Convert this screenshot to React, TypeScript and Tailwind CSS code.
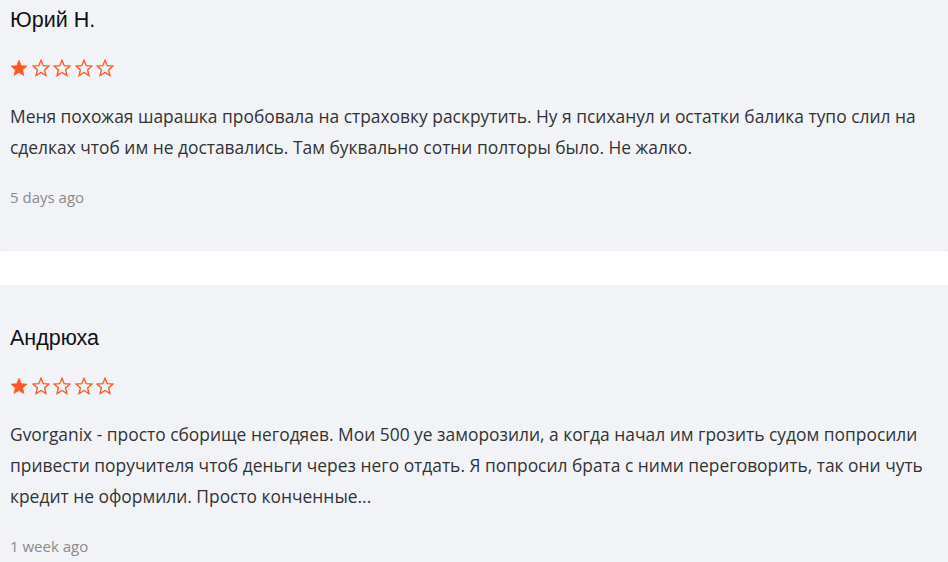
import React from 'react';

interface Review {
  id: number;
  author: string;
  rating: number;
  text: string;
  date: string;
}

const reviews: Review[] = [
  {
    id: 1,
    author: 'Юрий Н.',
    rating: 1,
    text: 'Меня похожая шарашка пробовала на страховку раскрутить. Ну я психанул и остатки балика тупо слил на сделках чтоб им не доставались. Там буквально сотни полторы было. Не жалко.',
    date: '5 days ago',
  },
  {
    id: 2,
    author: 'Андрюха',
    rating: 1,
    text: 'Gvorganix - просто сборище негодяев. Мои 500 уе заморозили, а когда начал им грозить судом попросили привести поручителя чтоб деньги через него отдать. Я попросил брата с ними переговорить, так они чуть кредит не оформили. Просто конченные...',
    date: '1 week ago',
  },
];

const Star = ({ filled }: { filled: boolean }) => (
  <svg viewBox="0 0 24 24" className="w-[18px] h-[18px]" fill={filled ? '#ff5722' : 'none'} stroke="#ff5722" strokeWidth={filled ? 1 : 1.8} strokeLinejoin="miter">
    <path d="M12 1.8l3 7.1 7.6.6-5.8 5 1.8 7.5L12 18l-6.6 4 1.8-7.5-5.8-5 7.6-.6z" />
  </svg>
);

const ReviewCard = ({ review }: { review: Review }) => (
  <div className="bg-[#f2f3f7] pl-[10px] pr-0 pt-[41px] pb-[43px] border-b border-dotted border-[#e3e5ec]">
    <h3 className="text-[21.5px] leading-6 text-[#111] font-['Liberation_Sans',Arial,sans-serif]">{review.author}</h3>
    <div className="flex gap-[3.5px] mt-[27px]">
      {[1, 2, 3, 4, 5].map((n) => (
        <Star key={n} filled={n <= review.rating} />
      ))}
    </div>
    <p className="mt-[24px] text-[17.4px] leading-[31px] text-[#333]">{review.text}</p>
    <div className="mt-[24px] text-[15px] leading-5 text-[#8a8a8a]">{review.date}</div>
  </div>
);

export default function App() {
  return (
    <div className="min-h-screen bg-white overflow-hidden font-['Open_Sans','Noto_Sans',sans-serif]">
      <div className="flex flex-col gap-[34px] -mt-[33px]">
        {reviews.map((r) => (
          <ReviewCard key={r.id} review={r} />
        ))}
      </div>
    </div>
  );
}
